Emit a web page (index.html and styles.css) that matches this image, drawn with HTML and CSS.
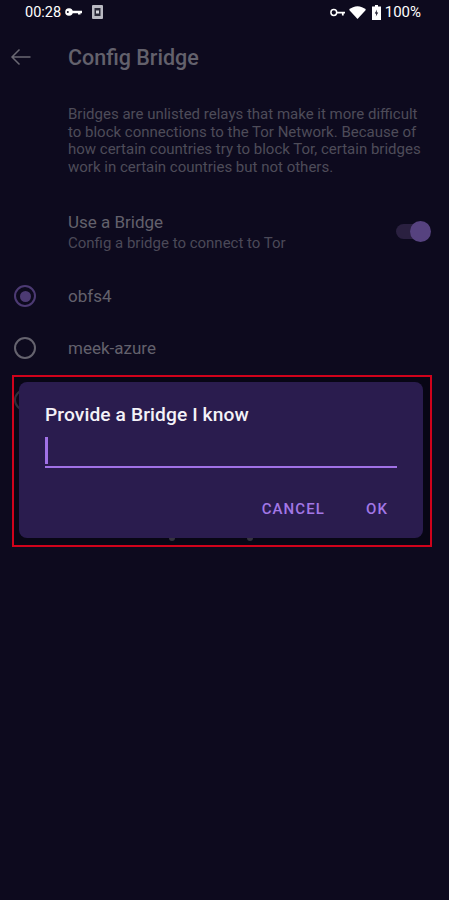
FILE: index.html
```html
<!DOCTYPE html>
<html lang="en">
<head>
<meta charset="utf-8">
<title>Config Bridge</title>
<link rel="stylesheet" href="styles.css">
</head>
<body>
<div class="screen">
  <div class="statusbar">
    <div class="status-left">
      <span class="clock">00:28</span>
      <svg class="key-small" width="17" height="8" viewBox="0 0 17 8"><circle cx="4" cy="4" r="3.800" fill="#fff"/><circle cx="2.800" cy="4" r="1" fill="#0d0a1e"/><path d="M7 2.800h10v2.400h-1.500v1.200H13V5.200H7z" fill="#fff"/></svg>
      <svg class="sim" width="11" height="14" viewBox="0 0 11 14"><rect width="11" height="14" rx="1" fill="#b9b9c2"/><rect x="2.500" y="3" width="6" height="8" fill="#2a2a38"/><rect x="4" y="5.500" width="3" height="3" fill="#d5d5dc"/></svg>
    </div>
    <div class="status-right">
      <svg class="vpn" width="15" height="9" viewBox="0 0 15 9"><circle cx="3.800" cy="4.500" r="2.900" fill="none" stroke="#fff" stroke-width="1.500"/><path d="M6.500 3.700H15v1.800h-1.300v2h-1.800v-2H6.500z" fill="#fff"/></svg>
      <svg class="wifi" width="17" height="13" viewBox="0 0 17 13"><path d="M0 3.800C4.800-1 12.200-1 17 3.800L8.500 13z" fill="#fff"/></svg>
      <svg class="battery" width="9" height="15" viewBox="0 0 9 15"><path d="M3 0h3v1.500h3V15H0V1.500h3z" fill="#fff"/><path d="M5 4.500 2.800 8.500h1.500l-.5 3L6.200 7.500H4.600z" fill="#0d0a1e"/></svg>
      <span class="percent">100%</span>
    </div>
  </div>

  <div class="content">
    <div class="toolbar">
      <svg class="back" width="22" height="18" viewBox="0 0 22 18"><path d="M20.500 9H2M9.500 1.500 2 9l7.500 7.500" fill="none" stroke="#6a6873" stroke-width="1.500"/></svg>
      <h1 class="title">Config Bridge</h1>
    </div>

    <p class="intro">Bridges are unlisted relays that make it more difficult to block connections to the Tor Network. Because of how certain countries try to block Tor, certain bridges work in certain countries but not others.</p>

    <div class="switch-row">
      <div class="switch-text">
        <div class="switch-title">Use a Bridge</div>
        <div class="switch-sub">Config a bridge to connect to Tor</div>
      </div>
      <div class="switch"><span class="track"></span><span class="thumb"></span></div>
    </div>

    <div class="radio-row first">
      <span class="radio checked"><span class="dot"></span></span>
      <span class="radio-label">obfs4</span>
    </div>
    <div class="radio-row">
      <span class="radio"></span>
      <span class="radio-label">meek-azure</span>
    </div>
    <div class="radio-row">
      <span class="radio"></span>
    </div>
  </div>

  <div class="highlight">
    <div class="dialog">
      <div class="dialog-title">Provide a Bridge I know</div>
      <div class="field"><span class="caret"></span></div>
      <div class="actions">
        <span class="action">CANCEL</span>
        <span class="action">OK</span>
      </div>
    </div>
    <span class="descender d1"></span>
    <span class="descender d2"></span>
  </div>
</div>
</body>
</html>
```
FILE: styles.css
```css
* { box-sizing: border-box; }
html, body { margin: 0; padding: 0; }
body { background: #0d0a1e; font-family: Roboto, "Liberation Sans", sans-serif; }
.screen { position: relative; width: 449px; height: 900px; overflow: hidden; background: #0d0a1e; }

.statusbar { height: 24px; display: flex; justify-content: space-between; align-items: center; padding: 0 28px 0 25px; color: #fff; font-size: 14px; }
.status-left, .status-right { display: flex; align-items: center; }
.clock { font-size: 14.500px; }
.key-small { margin-left: 4px; }
.sim { margin-left: 10px; }
.vpn { margin-right: 4px; }
.wifi { margin-right: 6px; }
.battery { margin-right: 4px; }
.percent { font-size: 15px; }

.toolbar { display: flex; align-items: center; height: 42px; margin-top: 12px; padding-left: 10px; }
.title { margin: 0 0 0 36px; font-size: 21.500px; font-weight: 500; color: #63616c; }

.intro { margin: 28px 25px 0 68px; font-size: 15px; line-height: 17.600px; color: #4e4c59; }

.switch-row { display: flex; justify-content: space-between; align-items: center; margin-top: 35px; padding: 0 18px 0 68px; }
.switch-title { font-size: 17px; line-height: 22px; color: #63616c; }
.switch-sub { font-size: 15px; line-height: 20px; color: #4b4958; }
.switch { position: relative; width: 36px; height: 22px; }
.track { position: absolute; left: 1px; top: 3px; width: 32px; height: 15px; border-radius: 8px; background: #2a2040; }
.thumb { position: absolute; right: 0; top: 0; width: 21px; height: 21px; border-radius: 50%; background: #56427f; }

.radio-row { display: flex; align-items: center; height: 52px; padding-left: 14px; }
.radio-row.first { margin-top: 17px; }
.radio { display: flex; align-items: center; justify-content: center; width: 22px; height: 22px; border: 2px solid #65636e; border-radius: 50%; }
.radio.checked { border-color: #4c3a73; }
.dot { width: 11px; height: 11px; border-radius: 50%; background: #4c3a73; }
.radio-label { margin-left: 32px; font-size: 17px; color: #63616c; }

.highlight { position: absolute; left: 12px; top: 375px; width: 420px; height: 172px; padding: 5px 7px 7px 5px; border: 2px solid #d0021b; background: rgba(5, 3, 15, 0.55); }
.dialog { height: 156px; padding: 20px 26px 0 26px; background: #2a1c4e; border-radius: 8px; }
.dialog-title { font-size: 19.200px; font-weight: 500; line-height: 26px; color: #f4f2f8; letter-spacing: 0.100px; }
.field { height: 36px; margin-top: 4px; padding-top: 5px; border-bottom: 2px solid #a071e6; }
.caret { display: block; width: 2.500px; height: 27px; background: #a071e6; }
.actions { display: flex; justify-content: flex-end; gap: 41px; margin-top: 32px; padding-right: 9px; }
.action { font-size: 15px; font-weight: 500; letter-spacing: 1.100px; color: #a277e6; }

.descender { position: absolute; top: 161px; width: 6px; height: 3px; border-radius: 0 0 3px 3px; background: #35333f; }
.d1 { left: 155px; }
.d2 { left: 233px; }
```
